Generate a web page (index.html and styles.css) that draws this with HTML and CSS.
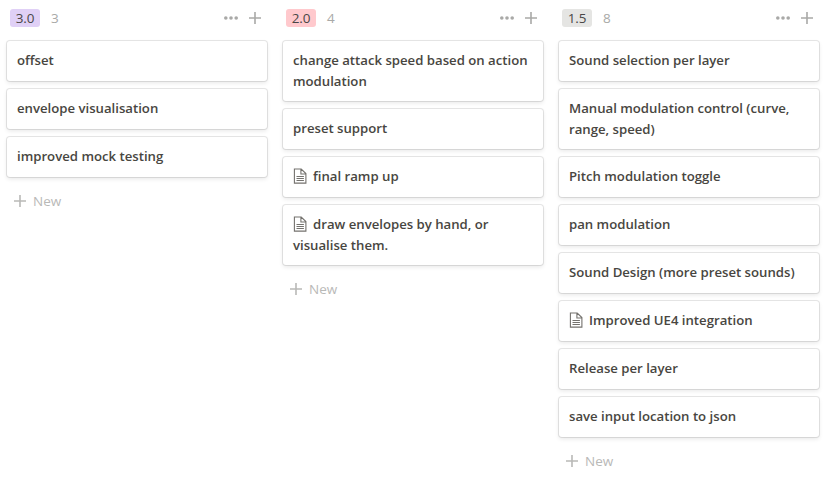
FILE: index.html
```html
<!DOCTYPE html>
<html lang="en">
<head>
<meta charset="utf-8">
<title>Board</title>
<link rel="stylesheet" href="styles.css">
</head>
<body>
<svg class="defs" width="0" height="0" aria-hidden="true">
<symbol id="dots" viewBox="0 0 14 14"><circle cx="1.8" cy="7" r="1.8"/><circle cx="7" cy="7" r="1.8"/><circle cx="12.2" cy="7" r="1.8"/></symbol>
<symbol id="plus" viewBox="0 0 12 12"><path d="M5.2 0h1.6v5.2H12v1.6H6.8V12H5.2V6.8H0V5.2h5.2z"/></symbol>
<symbol id="page" viewBox="0 0 14 16"><path d="M1.4 1h6.8l4.7 4.6v9.5H1.4zM7.9 1v5h5M3.5 8.5h7.4M3.5 10.5h7.4M3.5 12.5h7.4" fill="none" stroke="currentColor" stroke-width="1.1"/></symbol>
</svg>
<main class="board">
<section class="column">
<header class="head"><span class="tag purple">3.0</span><span class="count">3</span><svg class="dots"><use href="#dots"/></svg><svg class="plus"><use href="#plus"/></svg></header>
<article class="card">offset</article>
<article class="card">envelope visualisation</article>
<article class="card">improved mock testing</article>
<div class="new"><svg class="plus"><use href="#plus"/></svg><span>New</span></div>
</section>
<section class="column">
<header class="head"><span class="tag red">2.0</span><span class="count">4</span><svg class="dots"><use href="#dots"/></svg><svg class="plus"><use href="#plus"/></svg></header>
<article class="card">change attack speed based on action<br>modulation</article>
<article class="card">preset support</article>
<article class="card"><svg class="page"><use href="#page"/></svg>final ramp up</article>
<article class="card"><svg class="page"><use href="#page"/></svg>draw envelopes by hand, or<br>visualise them.</article>
<div class="new"><svg class="plus"><use href="#plus"/></svg><span>New</span></div>
</section>
<section class="column">
<header class="head"><span class="tag gray">1.5</span><span class="count">8</span><svg class="dots"><use href="#dots"/></svg><svg class="plus"><use href="#plus"/></svg></header>
<article class="card">Sound selection per layer</article>
<article class="card">Manual modulation control (curve,<br>range, speed)</article>
<article class="card">Pitch modulation toggle</article>
<article class="card">pan modulation</article>
<article class="card">Sound Design (more preset sounds)</article>
<article class="card"><svg class="page"><use href="#page"/></svg>Improved UE4 integration</article>
<article class="card">Release per layer</article>
<article class="card">save input location to json</article>
<div class="new"><svg class="plus"><use href="#plus"/></svg><span>New</span></div>
</section>
</main>
</body>
</html>
```
FILE: styles.css
```css
* { box-sizing: border-box; }
body { margin: 0; background: #fff; color: #37352f; font: 14px/21px "Open Sans", "Noto Sans", sans-serif; overflow: hidden; }
.defs { display: block; }
.board { display: flex; gap: 14px; padding: 0 6px; }
.column { width: 262px; flex: none; }
.head { display: flex; align-items: center; height: 36px; margin-bottom: 5px; padding: 0 7px 0 4px; }
.tag { width: 30px; height: 18px; line-height: 18px; text-align: center; border-radius: 3px; font-size: 13.5px; letter-spacing: -.2px; color: #4a4747; }
.purple { background: #e0d0f6; }
.red { background: #ffc9cd; }
.gray { background: #e5e5e3; }
.count { margin-left: 11px; font-size: 13.5px; color: #a9a9a7; }
svg { fill: #a9a9a7; flex: none; }
.dots { width: 14px; height: 14px; margin-left: auto; margin-right: 11px; }
.plus { width: 12px; height: 12px; }
.card { min-height: 40px; margin: 0 1px 8px; padding: 9px 10px; border-radius: 3px; background: #fff; box-shadow: 0 0 0 1px rgba(15,15,15,.1), 0 2px 4px rgba(15,15,15,.1); color: #484641; font-weight: 600; font-size: 13.2px; letter-spacing: -.01px; white-space: nowrap; }
.page { width: 14px; height: 16px; margin-right: 6px; vertical-align: -3px; color: #74726e; }
.new { display: flex; align-items: center; height: 32px; padding-left: 8px; color: #b9b9b7; font-size: 13.5px; }
.new .plus { margin-right: 7px; fill: #b9b9b7; }
```
